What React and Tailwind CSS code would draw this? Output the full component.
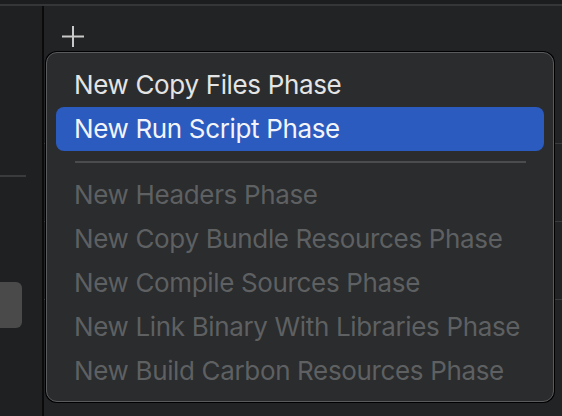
import React from 'react';

const enabledItems = ['New Copy Files Phase', 'New Run Script Phase'];
const disabledItems = [
  'New Headers Phase',
  'New Copy Bundle Resources Phase',
  'New Compile Sources Phase',
  'New Link Binary With Libraries Phase',
  'New Build Carbon Resources Phase',
];

const App = () => {
  return (
    <div
      className="relative w-[562px] h-[416px] overflow-hidden bg-[#222325] flex flex-col"
      style={{ fontFamily: 'Inter, "Noto Sans", sans-serif' }}
    >
      {/* top strip */}
      <div className="h-[4px] bg-[#1c1d1e]" />
      <div className="h-[2px] bg-[#353637]" />

      <div className="flex flex-1">
        {/* left sidebar */}
        <div className="w-[42px] bg-[#1f2021] flex flex-col">
          <div className="h-[169px]" />
          <div className="h-[2px] w-[26px] bg-[#3a3b3c]" />
          <div className="h-[105px]" />
          <div className="h-[46px] w-[22px] rounded-r-[6px] bg-[#4a4a4b]" />
        </div>
        <div className="w-[2px] bg-[#0b0b0c]" />

        {/* main pane */}
        <div className="flex-1 flex flex-col">
          <div className="h-[50px] pl-[18px] pt-[20px]">
            <svg width="22" height="22" viewBox="0 0 22 22">
              <path d="M11 0v21M0 10.5h22" stroke="#c9c9c9" strokeWidth="2" />
            </svg>
          </div>
          <div className="h-[87px]" />
          <div className="h-[1px] bg-[#3a3b3c]" />
          <div className="h-[77px]" />
          <div className="h-[1px] bg-[#3a3b3c]" />
          <div className="h-[77px]" />
          <div className="h-[1px] bg-[#3a3b3c]" />
        </div>
      </div>

      {/* popup menu */}
      <div className="absolute left-[46px] top-[52px] w-[508px] h-[350px] rounded-[11px] border border-[#5a5b5c] bg-[#2a2c2d] shadow-[0_0_0_1px_#000] pt-[10px] px-[9px]">
        {enabledItems.map((label, i) => (
          <div
            key={label}
            className={
              'h-[44px] rounded-[8px] pl-[18px] pb-[2px] flex items-center text-[26px] tracking-[-0.35px] ' +
              (i === 1 ? 'bg-[#2c5bbf] text-[#f2f4fa]' : 'text-[#e4e4e5]')
            }
          >
            {label}
          </div>
        ))}
        <div className="h-[22px] flex items-center pl-[19px] pr-[18px]">
          <div className="h-[2px] w-full bg-[#4b4c4d]" />
        </div>
        {disabledItems.map((label) => (
          <div
            key={label}
            className="h-[44px] pl-[18px] pb-[2px] flex items-center text-[26px] tracking-[-0.35px] text-[#5e6062]"
          >
            {label}
          </div>
        ))}
      </div>
    </div>
  );
};

export default App;
